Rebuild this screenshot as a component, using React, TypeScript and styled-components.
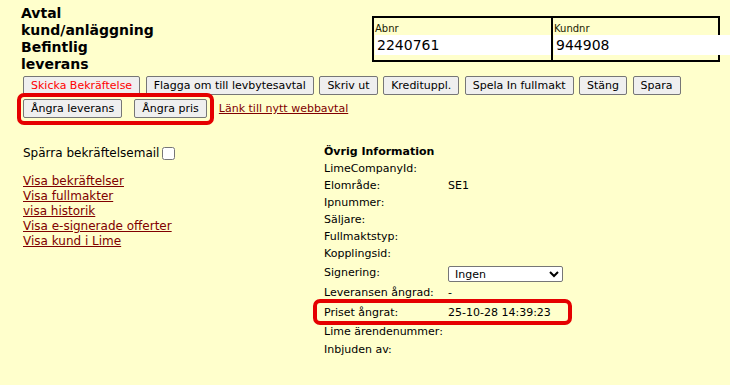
import React from 'react';
import styled, { createGlobalStyle } from 'styled-components';

const GlobalStyle = createGlobalStyle`
    body {
        margin: 0;
        background: #ffffcc;
        font-family: Verdana, "DejaVu Sans", sans-serif;
        color: #000;
    }
`;

const infoRows: { label: string; value?: string; h: number; select?: boolean; marked?: boolean }[] = [
    { label: 'LimeCompanyId:', h: 17 },
    { label: 'Elområde:', value: 'SE1', h: 17 },
    { label: 'Ipnummer:', h: 17 },
    { label: 'Säljare:', h: 17 },
    { label: 'Fullmaktstyp:', h: 17 },
    { label: 'Kopplingsid:', h: 17 },
    { label: 'Signering:', h: 21, select: true },
    { label: 'Leveransen ångrad:', value: '-', h: 19 },
    { label: 'Priset ångrat:', value: '25-10-28 14:39:23', h: 20, marked: true },
    { label: 'Lime ärendenummer:', h: 18 },
    { label: 'Inbjuden av:', h: 18 },
];

const topButtons = ['Flagga om till levbytesavtal', 'Skriv ut', 'Kredituppl.', 'Spela In fullmakt', 'Stäng', 'Spara'];

const links = ['Visa bekräftelser', 'Visa fullmakter', 'visa historik', 'Visa e-signerade offerter', 'Visa kund i Lime'];

const App = () => {
    return (
        <Page>
            <GlobalStyle />
            <Header>
                <Title>Avtal<br />kund/anläggning<br />Befintlig<br />leverans</Title>
                <NumberTable>
                    <NumberCell>
                        <CellLabel>Abnr</CellLabel>
                        <CellValue readOnly value="2240761" />
                    </NumberCell>
                    <NumberCell $divider>
                        <CellLabel>Kundnr</CellLabel>
                        <CellValue readOnly value="944908" />
                    </NumberCell>
                </NumberTable>
            </Header>

            <Toolbar>
                <Button $danger>Skicka Bekräftelse</Button>
                {topButtons.map(b => <Button key={b}>{b}</Button>)}
            </Toolbar>
            <Toolbar $gap={12}>
                <Marked $inset="-6px -7px -7px -6px">
                    <Toolbar $gap={12}>
                        <Button>Ångra leverans</Button>
                        <Button>Ångra pris</Button>
                    </Toolbar>
                </Marked>
                <SmallLink href="#">Länk till nytt webbavtal</SmallLink>
            </Toolbar>

            <Content>
                <LeftCol>
                    <BlockLabel>Spärra bekräftelsemail <input type="checkbox" /></BlockLabel>
                    <LinkList>
                        {links.map(l => <a key={l} href="#">{l}</a>)}
                    </LinkList>
                </LeftCol>
                <InfoTable>
                    <InfoRow $h={17}><InfoHead>Övrig Information</InfoHead></InfoRow>
                    {infoRows.map(r => {
                        const row = (
                            <InfoRow key={r.label} $h={r.h}>
                                <InfoLabel>{r.label}</InfoLabel>
                                {r.select
                                    ? <Select defaultValue="Ingen"><option>Ingen</option></Select>
                                    : <span>{r.value}</span>}
                            </InfoRow>
                        );
                        return r.marked
                            ? <Marked key={r.label} $inset="-3px -7px -3px -11px">{row}</Marked>
                            : row;
                    })}
                </InfoTable>
            </Content>
        </Page>
    );
};

const Page = styled.div`
    padding: 5px 0 0 23px;
    height: 380px;
`;

const Header = styled.div`
    display: flex;
    align-items: flex-start;
`;

const Title = styled.h1`
    margin: 0 0 0 -2px;
    width: 351px;
    font-size: 14px;
    line-height: 17px;
    font-weight: bold;
`;

const NumberTable = styled.div`
    display: flex;
    margin-top: 11px;
    width: 344px;
    border: 2px solid #000;
`;

const NumberCell = styled.div<{ $divider?: boolean }>`
    flex: 1;
    display: flex;
    flex-direction: column;
    padding: 5px 0 5px 1px;
    border-left: ${p => (p.$divider ? '2px solid #000' : 'none')};
`;

const CellLabel = styled.span`
    font-size: 10px;
    line-height: 12px;
    color: #1a1a00;
`;

const CellValue = styled.input`
    border: none;
    outline: none;
    background: #fff;
    height: 20px;
    padding: 0 0 0 2px;
    margin: 0;
    font-family: Verdana, "DejaVu Sans", sans-serif;
    font-size: 14px;
    color: #000;
    width: auto;
`;

const Toolbar = styled.div<{ $gap?: number }>`
    display: flex;
    align-items: center;
    gap: ${p => p.$gap ?? 5.5}px;
    margin-top: ${p => (p.$gap ? 0 : 3)}px;
    & + & {
        margin-top: 4px;
    }
`;

const Button = styled.button<{ $danger?: boolean }>`
    font-family: Verdana, "DejaVu Sans", sans-serif;
    font-size: 11px;
    line-height: 13px;
    height: 19px;
    padding: 2px 7px;
    background: #efefef;
    border: 1px solid #767676;
    border-radius: 2px;
    color: ${p => (p.$danger ? '#ff0000' : '#000')};
    white-space: nowrap;
`;

const Marked = styled.div<{ $inset: string }>`
    position: relative;
    &::after {
        content: '';
        position: absolute;
        inset: ${p => p.$inset};
        border: 4px solid #e50000;
        border-radius: 7px;
        pointer-events: none;
    }
`;

const SmallLink = styled.a`
    font-size: 11px;
    color: #800000;
`;

const Content = styled.div`
    display: flex;
    margin-top: 25px;
`;

const LeftCol = styled.div`
    width: 301px;
    padding-top: 3px;
    font-size: 12px;
    line-height: 15px;
`;

const BlockLabel = styled.div`
    display: flex;
    align-items: center;
    gap: 3px;
    height: 15px;
    input {
        margin: 0;
        width: 13px;
        height: 13px;
    }
`;

const LinkList = styled.div`
    display: flex;
    flex-direction: column;
    align-items: flex-start;
    margin-top: 13px;
    a {
        color: #800000;
    }
`;

const InfoTable = styled.div`
    display: flex;
    flex-direction: column;
    width: 241px;
    font-size: 11px;
`;

const InfoRow = styled.div<{ $h: number }>`
    display: flex;
    align-items: center;
    height: ${p => p.$h}px;
`;

const InfoHead = styled.span`
    font-weight: bold;
`;

const InfoLabel = styled.span`
    width: 124px;
    flex: none;
`;

const Select = styled.select`
    width: 115px;
    height: 16px;
    font-family: Verdana, "DejaVu Sans", sans-serif;
    font-size: 11px;
    padding: 0 0 0 2px;
    border: 1px solid #767676;
    border-radius: 2px;
    background: #fff;
    margin-top: 2px;
`;

export default App;
